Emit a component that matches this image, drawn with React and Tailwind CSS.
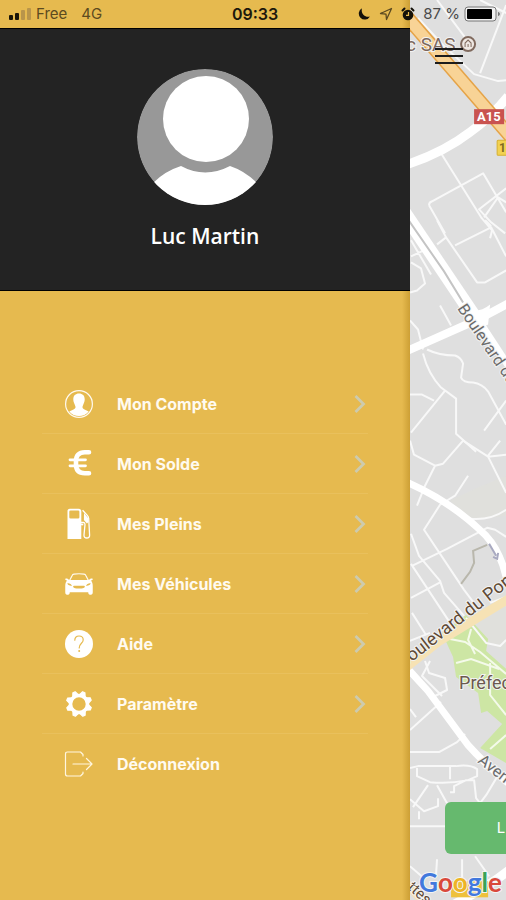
function AccountIcon() {
  return (
    <svg viewBox="0 0 30 30" className="size-[30px]" fill="none">
      <circle cx="15" cy="15" r="13.4" stroke="#fffaf0" strokeWidth="1.2" />
      <path
        fill="#fff"
        d="M15 4.600c-3.600 0-5.800 2.300-5.700 5.900.1 2 .6 3.300 1.200 4.500.4 1 .8 1.800 1 2.800.1 1.300-.4 2-1.500 2.500L5.300 22.600A12.800 12.800 0 0 0 24.700 22.600L20 20.300c-1.100-.5-1.600-1.200-1.500-2.500.2-1 .6-1.800 1-2.800.6-1.200 1.100-2.500 1.200-4.500.1-3.600-2.100-5.900-5.700-5.900z"
      />
    </svg>
  );
}

function EuroIcon() {
  return (
    <svg viewBox="0 0 30 30" className="size-[30px]" fill="none">
      <g stroke="#fff" strokeLinecap="round">
        <path
          strokeWidth="4.600"
          d="M25 3.300h-4.200c-6 0-8.800 3.200-8.800 8.700v3.500c0 5.500 2.800 8.700 8.800 8.700H25"
        />
        <path strokeWidth="2.800" d="M6 10.800h15.500M6 16.800h15.500" />
      </g>
    </svg>
  );
}

function FuelIcon() {
  return (
    <svg viewBox="0 0 30 32" className="h-8 w-[30px]" fill="none">
      <path
        fill="#fff"
        fillRule="evenodd"
        d="M6 .8h8.500a2.800 2.800 0 0 1 2.800 2.800V31H3.500V3.600A2.600 2.600 0 0 1 6 .8zm.6 1.700a1.300 1.300 0 0 0-1.300 1.300v5.400a1.300 1.300 0 0 0 1.300 1.300h7.500a1.300 1.300 0 0 0 1.300-1.300V3.800a1.300 1.300 0 0 0-1.300-1.300z"
      />
      <path
        stroke="#fff"
        strokeWidth="1.3"
        strokeLinejoin="round"
        d="M17 14.500h2.500c1.300 0 1.500 1 1.500 2l-1 10.500c-.2 2 1 3 2.800 3s3-1 2.800-3L24.700 10.500c-.1-1.500-.7-2.400-1.600-3.400L18.600 2.300M17 16.500h1.600l.4.800"
      />
      <path fill="#fff" d="M20 5l4.500 5.500V14l-1.600 1.500-3-3.500z" />
    </svg>
  );
}

function CarIcon() {
  return (
    <svg viewBox="0 0 32 26" className="h-6 w-[30px]" fill="none">
      <path
        stroke="#fffaf0"
        strokeWidth="1.3"
        d="M5.500 9.800L8.600 3.700c.4-.9 1-1.200 2-1.400 3.500-.5 7.300-.5 10.800 0 1 .2 1.600.5 2 1.400l3.100 6.100"
      />
      <path
        fill="#fff"
        fillRule="evenodd"
        d="M1.200 7.200c1.500-.3 2.800 0 3.300 1L6 8.800h20l1.500-.6c.5-1 1.800-1.300 3.300-1 .3 1-.4 1.800-1.800 2 1.400 1.600 1.900 3.500 1.900 6V22c0 1.800-.6 2.600-2 2.600h-1c-1.300 0-1.900-.8-1.900-2.600H6c0 1.800-.6 2.600-1.900 2.600h-1c-1.400 0-2-.8-2-2.600v-6.800c0-2.500.5-4.400 1.900-6-1.400-.2-2.100-1-1.800-2zM3.500 12c0 1.900 1.400 3 4.800 3.100-.2-1.500-2-2.700-4.800-3.100zm25 0c-2.800.4-4.600 1.600-4.800 3.100 3.400-.1 4.800-1.200 4.800-3.100zM10.500 15c-.9 0-1 .8-.6 1.500.6.900 2.200 1.500 6.100 1.500s5.500-.6 6.100-1.500c.4-.7.300-1.500-.6-1.500z"
      />
    </svg>
  );
}

function HelpIcon() {
  return (
    <svg viewBox="0 0 30 30" className="size-[30px]" fill="none">
      <circle cx="15" cy="15" r="14" fill="#fff" />
      <path
        stroke="#e6ba4f"
        strokeWidth="1.200"
        strokeLinecap="round"
        d="M10.800 11.200c0-2.600 1.700-4.200 4.200-4.200s4.200 1.600 4.200 3.900c0 3.300-4 3.600-4 8"
      />
      <circle cx="15.200" cy="22" r="1" fill="#e6ba4f" />
    </svg>
  );
}

const gearAngles = [22, 67, 112, 157, 202, 247, 292, 337];

function GearIcon() {
  return (
    <svg viewBox="0 0 30 30" className="size-[30px]" fill="none">
      <circle cx="15" cy="15" r="8.500" stroke="#fff" strokeWidth="3.600" />
      {gearAngles.map((angle) => (
        <path
          key={angle}
          fill="#fff"
          stroke="#fff"
          strokeLinejoin="round"
          d="M11.500 7l2.200-4.800h2.600L18.500 7z"
          transform={`rotate(${angle} 15 15)`}
        />
      ))}
    </svg>
  );
}

function LogoutIcon() {
  return (
    <svg viewBox="0 0 30 26" className="h-[26px] w-[30px]" fill="none">
      <path
        stroke="#fff6df"
        strokeWidth="1.200"
        strokeLinecap="round"
        strokeLinejoin="round"
        d="M19 5V3.500L16.500 1H3.500Q1.500 1 1.500 3v20q0 2 2 2h13L19 22.500V21M9 13h19M22.500 7.500L28 13l-5.500 5.500"
      />
    </svg>
  );
}

const menuItems = [
  { label: "Mon Compte", Icon: AccountIcon, chevron: true },
  { label: "Mon Solde", Icon: EuroIcon, chevron: true },
  { label: "Mes Pleins", Icon: FuelIcon, chevron: true },
  { label: "Mes Véhicules", Icon: CarIcon, chevron: true },
  { label: "Aide", Icon: HelpIcon, chevron: true },
  { label: "Paramètre", Icon: GearIcon, chevron: true },
  { label: "Déconnexion", Icon: LogoutIcon, chevron: false },
];

function StatusBar() {
  return (
    <header className="absolute inset-x-0 top-0 z-20 grid h-7 grid-cols-[1fr_auto_1fr] items-center pr-1 pl-2 text-[15px] text-[#2b2414]">
      <div className="flex items-center">
        <svg viewBox="0 0 24 14" className="h-[14px] w-6">
          <rect x="1" y="8" width="4" height="5" rx="1" fill="#1a1508" />
          <rect x="7" y="6" width="4" height="7" rx="1" fill="#1a1508" />
          <rect x="13" y="3" width="4" height="10" rx="1" fill="#b9954a" />
          <rect x="19" y="1" width="4" height="12" rx="1" fill="#b9954a" />
        </svg>
        <span className="ml-1 text-[#5c4a20]">Free</span>
        <span className="ml-[14px] text-[#5c4a20]">4G</span>
      </div>
      <span className="text-base font-semibold text-[#1d180c]">09:33</span>
      <div className="flex items-center justify-end">
        <svg viewBox="0 0 14 14" className="size-[14px]">
          <path
            fill="#14110a"
            d="M5 1.200a6 6 0 1 0 8 8.300C8.500 11 3.500 7 5 1.200z"
          />
        </svg>
        <svg viewBox="0 0 14 14" className="ml-2 size-[14px]" fill="none">
          <path
            stroke="#5c4a20"
            strokeWidth="1.300"
            strokeLinejoin="round"
            d="M12.500 1.500L1.500 6.500l5.500.7.500 5.300z"
          />
        </svg>
        <svg viewBox="0 0 14 14" className="ml-2 size-[14px]" fill="none">
          <circle cx="7" cy="8" r="5.300" fill="#14110a" />
          <path
            stroke="#14110a"
            strokeWidth="2"
            strokeLinecap="round"
            d="M1.500 3.500l2-2M12.500 3.500l-2-2"
          />
          <path stroke="#e6ba4f" strokeWidth="1.200" d="M7.500 5v3.400H5" />
        </svg>
        <span className="ml-2 whitespace-nowrap text-[#4a4a4a]">87 %</span>
        <svg viewBox="0 0 38 16" className="ml-1 h-4 w-[38px]" fill="none">
          <rect
            x="1"
            y="1"
            width="31"
            height="14"
            rx="3"
            fill="#f0f0f0"
            stroke="#777"
          />
          <rect x="3" y="3" width="25" height="10" rx="1" fill="#000" />
          <path fill="#777" d="M34 6c2.500.3 2.500 3.700 0 4z" />
        </svg>
      </div>
    </header>
  );
}

function Avatar() {
  return (
    <svg viewBox="0 0 136 136" className="size-[136px]">
      <defs>
        <clipPath id="avatar">
          <circle cx="68" cy="68" r="68" />
        </clipPath>
      </defs>
      <g clipPath="url(#avatar)">
        <circle cx="68" cy="68" r="68" fill="#989898" />
        <path
          fill="#fff"
          d="M16 114q12-12 28-17 24 13 49 0 15 5 27 17v22H16z"
        />
        <circle cx="69" cy="50" r="43" fill="#fff" />
      </g>
    </svg>
  );
}

function MapView() {
  return (
    <svg
      viewBox="410 0 96 900"
      preserveAspectRatio="xMinYMin slice"
      className="absolute inset-0 size-full"
      fill="none"
    >
      <rect x="400" width="700" height="900" fill="#dfdfdf" />
      <path fill="#e0e0dc" d="M450 500l25-12 31-13v40l-33 4z" />
      <path fill="#e0e0dc" d="M470 612l36-22v60l-20-8z" />
      {/* park */}
      <path
        fill="#cde6a4"
        d="M442 632l24-18 22 24-2 12 20 18v94l-26-15 22-24-15-13-6 2-3-20-22-16-3-20z"
      />

      {/* side streets */}
      <g stroke="#f8f8f8" strokeWidth="2" strokeLinejoin="round">
        <path d="M418 18l26 28 30 28 24 7 8-1M437 0l30 40M480 0l26 13M506 5l-26 68" />
        <path d="M441 153l40 64 11 13-2 8M429 205q0-3 3-4l51-28 23 39M429 205l16 28M506 188l-27 21 12 13 14 11M484 217l14-20 8 5" />
        <path d="M437 220l9 17-9 7M446 237l31 45 8 0 21-12M455 245l36-18 15 29M485 220l6 6" />
        <path d="M411 256l15-7M411 240l20 34M411 262l10 6 4 15-8 7-7 2M440 305l11 20" />
        <path d="M410 320l8 9 5 20M427 349q12 6 28 6 6 2 8 8l-2 14q2 5 12 5 9 1 15 9l18 33M423 353q5 20 18 34l15 11v35l20 18M410 394h12l12 6M445 390l-34 42M506 400l-22 30" />
        <path d="M410 440l4 14 21 11 8-2 20-23 25 16 18-2M488 456l18 36M500 440l-12 15M435 465l-10 20-8 20" />
        <path d="M468 475l-13 20-15 9-16 25 40 60 12 16M411 533l8 22 21 25 4 12 20 23M412 565l35-17 40-21 8 2 11 7M411 563l43 65M411 597l30-16M412 612l14 22M470 518q20 2 36-9" />
        <path d="M466 617l20 25 14 3 6-6M506 596l-16 6M410 640l20-8M430 660l-8 15 20 20" />
        <path d="M425 660l4 12 16 5 2 12-12 6M441 701l-31 28M410 708l6 8M410 751h29l18-10 8-8" />
        <path d="M410 767l8-2h38q14-2 21 3v7l-9 4q-20 4-38 2l-13-6v-8M450 765v13M428 784l-15 22M437 784l10 18M450 791l4 0v-6l12-6h8l2 18 4 5 6-8 12-20" />
        <path d="M410 798l14 12 14-5v-8M419 818v-8M410 825h36" />
        <path d="M410 865l14 12M437 858l-1 16M462 858v20l12 6M475 855l14 20" />
      </g>
      <g stroke="#f4faea" strokeWidth="2">
        <path d="M445 637l20 4 15 10 26 22M471 628l-3 11 7 14M456 662l15-4 28 10M490 662v32l16 20M490 748l16-14" />
      </g>
      <path
        stroke="#b9b7ac"
        strokeWidth="2"
        d="M487 544l-14 6 1 12-4 9-9 12"
      />

      {/* main roads */}
      <g stroke="#fff" strokeLinejoin="round">
        <path strokeWidth="9" d="M408 164q36-12 62-32 22-16 38-36" />
        <path strokeWidth="14" d="M404 212l70 104" />
        <path strokeWidth="7" d="M472 310l38 58" />
        <path strokeWidth="8" d="M408 350l72-32 28-15" />
        <path strokeWidth="7" d="M408 482q45 20 78 53 14 15 20 41" />
        <path strokeWidth="7" d="M408 668l20 22 40 54q16 18 40 38" />
        <path strokeWidth="9" d="M448 906q40-20 62-38" />
      </g>
      <path fill="#fff" d="M464 308q14 6 26-4l-2 20q-8 4-14 6z" />
      <path stroke="#c4c4c4" strokeWidth="2" d="M408 219l36 52 19 31" />
      <path stroke="#a8a9c0" strokeWidth="2" d="M489 543l7 12M493 556l4 2 1-6" />

      {/* boulevard and motorway */}
      <path stroke="#f6e2b4" strokeWidth="9" d="M404 668l34-27 72-44" />
      <path stroke="#f6e2b4" strokeWidth="9" d="M404 880l26 26" />
      <path stroke="#e5a347" strokeWidth="14" d="M400 9l110 127" />
      <path stroke="#f8d396" strokeWidth="11" d="M400 9l110 127" />

      <g
        className="font-[Roboto,sans-serif]"
        stroke="#f3f3f3"
        strokeWidth="2"
        paintOrder="stroke"
      >
        <text x="406" y="51" fontSize="19" fill="#7b675d">
          c SAS
        </text>
        <text
          fontSize="16"
          fill="#6b6b6b"
          transform="translate(457 308) rotate(56)"
        >
          Boulevard du
        </text>
        <text
          fontSize="18"
          fill="#5f4a35"
          transform="translate(403 668) rotate(-38)"
        >
          Boulevard du Pon
        </text>
        <text x="459" y="688" fontSize="18" fill="#6b5a4e">
          Préfec
        </text>
        <text
          fontSize="16"
          fill="#6b6b6b"
          transform="translate(477 761) rotate(38)"
        >
          Aven
        </text>
        <text
          fontSize="15"
          fill="#5f4a35"
          transform="translate(407 887) rotate(42)"
        >
          ttes
        </text>
      </g>

      <circle
        cx="468"
        cy="44"
        r="7"
        fill="#eee7e2"
        stroke="#806a5e"
        strokeWidth="2"
      />
      <path stroke="#806a5e" d="M465 47v-4l3-3 3 3v4M468 47v-3" />

      <g className="font-[Roboto,sans-serif] font-bold">
        <rect x="474" y="109" width="30" height="15" fill="#c95350" />
        <text x="477" y="121" fontSize="13" fill="#fff">
          A15
        </text>
        <rect
          x="497"
          y="140"
          width="20"
          height="15"
          rx="1"
          fill="#f2d251"
          stroke="#d6b032"
        />
        <text x="499" y="152" fontSize="12" fill="#7d6a24">
          1
        </text>
      </g>
      <rect x="451" y="880" width="37" height="16" fill="#eec13c" />
      <text
        x="419"
        y="891"
        fontSize="26"
        className="font-[Lato,sans-serif] font-bold"
        stroke="#f4f4f4"
        strokeWidth="2"
        paintOrder="stroke"
      >
        <tspan fill="#4279dd">G</tspan>
        <tspan fill="#d9483b">o</tspan>
        <tspan fill="#eeb425">o</tspan>
        <tspan fill="#4279dd">g</tspan>
        <tspan fill="#3aa358">l</tspan>
        <tspan fill="#d9483b">e</tspan>
      </text>
    </svg>
  );
}

export default function App() {
  return (
    <div className="relative flex min-h-screen overflow-hidden bg-[#dfdfdf] font-[Inter,sans-serif]">
      <StatusBar />

      <aside className="relative z-10 w-[81%] shrink-0 bg-[#e6ba4f] pt-7">
        <div className="pointer-events-none absolute inset-y-0 right-0 w-2 bg-linear-to-r from-transparent to-[#9a6a0055]" />
        <div className="relative flex flex-col items-center border-y border-black bg-[#232323] pt-10 pb-[39px]">
          <Avatar />
          <h1 className="mt-4 font-['Open_Sans',sans-serif] text-[21px] leading-[30px] font-semibold text-white">
            Luc Martin
          </h1>
        </div>

        <nav className="px-[42px] pt-[83px]">
          <ul className="divide-y divide-[#e9c05c]">
            {menuItems.map(({ label, Icon, chevron }) => (
              <li key={label}>
                <button
                  type="button"
                  className="flex h-[59px] w-full items-center pr-[2px] pl-5 text-left"
                >
                  <span className="flex w-[34px] shrink-0 justify-center">
                    <Icon />
                  </span>
                  <span className="ml-[21px] flex-1 text-base font-bold text-[#fffaf0]">
                    {label}
                  </span>
                  {chevron && (
                    <svg viewBox="0 0 12 20" className="h-5 w-3" fill="none">
                      <path
                        stroke="#cdcbae"
                        strokeWidth="2.800"
                        d="M1.500 2L9.500 10l-8 8"
                      />
                    </svg>
                  )}
                </button>
              </li>
            ))}
          </ul>
        </nav>
      </aside>

      <main className="relative flex-1">
        <MapView />
        <button
          type="button"
          aria-label="Menu"
          className="absolute top-12 left-[25px] flex w-7 flex-col gap-[5px]"
        >
          <span className="h-[2px] bg-[#1c1c1c]" />
          <span className="h-[2px] bg-[#1c1c1c]" />
          <span className="h-[2px] bg-[#1c1c1c]" />
        </button>
        <button
          type="button"
          className="absolute bottom-[46px] left-[35px] h-[52px] w-[340px] rounded-md bg-[#66b96e] pl-[52px] text-left text-[15px] text-white"
        >
          L
        </button>
      </main>
    </div>
  );
}
